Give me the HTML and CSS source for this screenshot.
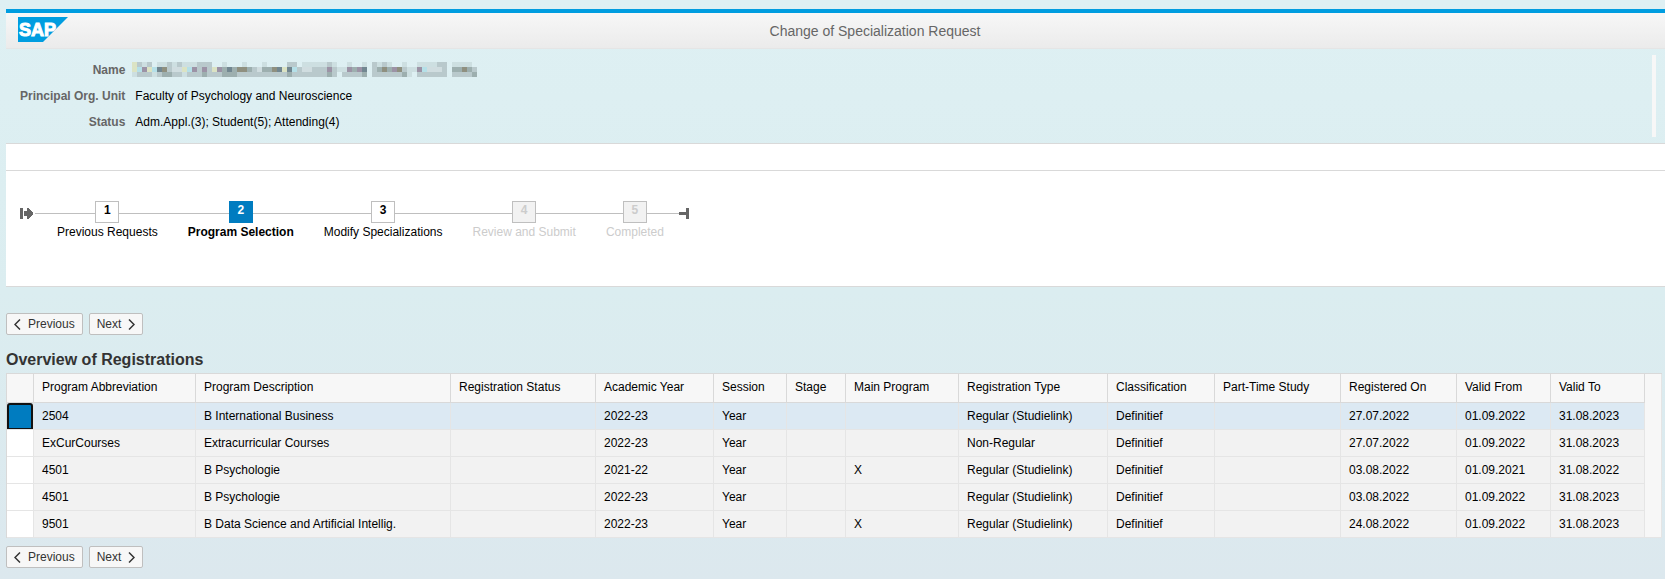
FILE: index.html
```html
<!DOCTYPE html>
<html lang="en">
<head>
    <meta charset="UTF-8">
    <meta name="viewport" content="width=device-width, initial-scale=1.0">
    <title>Change of Specialization Request</title>
    <link rel="stylesheet" href="styles.css">
</head>
<body>
    <header class="page-header">
        <svg class="logo" width="50" height="25" viewBox="0 0 50 25" role="img" aria-label="SAP">
            <path d="M0 0H50L25 25H0z" fill="#009de0"/>
            <text class="logo-text" x="1" y="19">SAP</text>
        </svg>
        <h1 class="page-title">Change of Specialization Request</h1>
    </header>

    <section class="student">
        <dl class="student-info">
            <dt>Name</dt>
            <dd>
                <!-- name is masked -->
                <svg class="masked" width="345" height="15" viewBox="0 0 69 3" preserveAspectRatio="none" shape-rendering="crispEdges">
                    <g fill="none" stroke-width="1">
                        <path stroke="#cddfe1" d="M2 .5h1M5 .5h2M8 .5h1M10 .5h3M18 .5h1M22 .5h1M26 .5h1M34 .5h5M40 .5h1M43 .5h1M46 .5h1M49 .5h3M54 .5h1M57 .5h4M64 .5h4M41 1.5h2M55 1.5h2M0 2.5h1M4 2.5h1M10 2.5h1M55 2.5h1"/>
                        <path stroke="#b9c9cc" d="M1 .5h1M3 .5h1M7 .5h1M9 .5h1M13 .5h3M31 .5h2M39 .5h1M48 .5h1M50 .5h1M61 .5h2M7 1.5h34M48 1.5h7M57 1.5h6M64 1.5h5M1 2.5h3M5 2.5h5M11 2.5h30M42 2.5h5M48 2.5h7M57 2.5h6M64 2.5h5"/>
                        <path stroke="#9dafaf" d="M18 1.5h1M20 1.5h1M23 1.5h1M26 1.5h2M44 1.5h1M49 1.5h1M51 1.5h1M64 1.5h2M67 1.5h1M6 2.5h2M14 2.5h1M18 2.5h3M31 2.5h1M39 2.5h1M46 2.5h1M54 2.5h1M68 2.5h1"/>
                        <path stroke="#728791" d="M5 1.5h1M19 1.5h1M29 1.5h1M31 1.5h1M46 1.5h1"/>
                        <path stroke="#8f9080" d="M6 1.5h1M21 1.5h2M28 1.5h1M50 1.5h1M53 1.5h1M66 1.5h1"/>
                        <path stroke="#9c93a6" d="M2 1.5h1M12 1.5h1M14 1.5h1M17 1.5h1M39 1.5h1M43 1.5h1M45 1.5h1M52 1.5h1M57 1.5h1"/>
                        <path stroke="#b5e0e8" d="M1 1.5h1M4 1.5h1M11 1.5h1M32 1.5h1M58 1.5h1"/>
                        <path stroke="#d0dde0" d="M8 1.5h2M25 1.5h1M34 1.5h2M59 1.5h3"/>
                        <path stroke="#dbe3c4" d="M0 .5h1M0 1.5h1M3 1.5h1M10 1.5h1M16 1.5h1M30 1.5h1"/>
                    </g>
                </svg>
            </dd>
            <dt>Principal Org. Unit</dt>
            <dd>Faculty of Psychology and Neuroscience</dd>
            <dt>Status</dt>
            <dd>Adm.Appl.(3); Student(5); Attending(4)</dd>
        </dl>
        <div class="student-handle"></div>
    </section>

    <div class="message-bar"></div>

    <nav class="roadmap">
        <svg class="roadmap-start" width="13" height="11" viewBox="0 0 13 11" shape-rendering="crispEdges">
            <path d="M0 0h3v11H0zM4 3h3V0h2v1h1v1h1v1h1v1h1v3h-1v1h-1v1h-1v1H9v1H7V8H4z" fill="#666"/>
        </svg>
        <ol class="steps">
            <li class="step">
                <span class="step-number">1</span>
                <span class="step-label">Previous Requests</span>
            </li>
            <li class="step current">
                <span class="step-number">2</span>
                <span class="step-label">Program Selection</span>
            </li>
            <li class="step">
                <span class="step-number">3</span>
                <span class="step-label">Modify Specializations</span>
            </li>
            <li class="step disabled">
                <span class="step-number">4</span>
                <span class="step-label">Review and Submit</span>
            </li>
            <li class="step disabled">
                <span class="step-number">5</span>
                <span class="step-label">Completed</span>
            </li>
        </ol>
        <svg class="roadmap-end" width="10" height="11" viewBox="0 0 10 11" shape-rendering="crispEdges">
            <path d="M0 4h7V0h3v11H7V7H0z" fill="#666"/>
        </svg>
    </nav>

    <main class="content">
        <div class="buttons">
            <button type="button" class="btn">
                <svg width="7" height="11" viewBox="0 0 7 11"><path d="M6 .5L1 5.5l5 5" fill="none" stroke="#333" stroke-width="1.5"/></svg>
                Previous
            </button>
            <button type="button" class="btn">
                Next
                <svg width="7" height="11" viewBox="0 0 7 11"><path d="M1 .5l5 5-5 5" fill="none" stroke="#333" stroke-width="1.5"/></svg>
            </button>
        </div>

        <h2 class="table-title">Overview of Registrations</h2>
        <table class="registrations">
            <colgroup>
                <col class="col-select">
                <col class="col-abbreviation">
                <col class="col-description">
                <col class="col-status">
                <col class="col-year">
                <col class="col-session">
                <col class="col-stage">
                <col class="col-main">
                <col class="col-type">
                <col class="col-classification">
                <col class="col-parttime">
                <col class="col-registered">
                <col class="col-from">
                <col class="col-to">
                <col class="col-scroll">
            </colgroup>
            <tbody>
                <tr>
                    <th></th>
                    <th>Program Abbreviation</th>
                    <th>Program Description</th>
                    <th>Registration Status</th>
                    <th>Academic Year</th>
                    <th>Session</th>
                    <th>Stage</th>
                    <th>Main Program</th>
                    <th>Registration Type</th>
                    <th>Classification</th>
                    <th>Part-Time Study</th>
                    <th>Registered On</th>
                    <th>Valid From</th>
                    <th>Valid To</th>
                    <td class="scroll" rowspan="6"></td>
                </tr>
                <tr class="selected">
                    <td class="select"><input type="radio" name="registration" aria-label="2504" checked></td>
                    <td>2504</td>
                    <td>B International Business</td>
                    <td></td>
                    <td>2022-23</td>
                    <td>Year</td>
                    <td></td>
                    <td></td>
                    <td>Regular (Studielink)</td>
                    <td>Definitief</td>
                    <td></td>
                    <td>27.07.2022</td>
                    <td>01.09.2022</td>
                    <td>31.08.2023</td>
                </tr>
                <tr>
                    <td class="select"><input type="radio" name="registration" aria-label="ExCurCourses"></td>
                    <td>ExCurCourses</td>
                    <td>Extracurricular Courses</td>
                    <td></td>
                    <td>2022-23</td>
                    <td>Year</td>
                    <td></td>
                    <td></td>
                    <td>Non-Regular</td>
                    <td>Definitief</td>
                    <td></td>
                    <td>27.07.2022</td>
                    <td>01.09.2022</td>
                    <td>31.08.2023</td>
                </tr>
                <tr>
                    <td class="select"><input type="radio" name="registration" aria-label="4501"></td>
                    <td>4501</td>
                    <td>B Psychologie</td>
                    <td></td>
                    <td>2021-22</td>
                    <td>Year</td>
                    <td></td>
                    <td>X</td>
                    <td>Regular (Studielink)</td>
                    <td>Definitief</td>
                    <td></td>
                    <td>03.08.2022</td>
                    <td>01.09.2021</td>
                    <td>31.08.2022</td>
                </tr>
                <tr>
                    <td class="select"><input type="radio" name="registration" aria-label="4501"></td>
                    <td>4501</td>
                    <td>B Psychologie</td>
                    <td></td>
                    <td>2022-23</td>
                    <td>Year</td>
                    <td></td>
                    <td></td>
                    <td>Regular (Studielink)</td>
                    <td>Definitief</td>
                    <td></td>
                    <td>03.08.2022</td>
                    <td>01.09.2022</td>
                    <td>31.08.2023</td>
                </tr>
                <tr>
                    <td class="select"><input type="radio" name="registration" aria-label="9501"></td>
                    <td>9501</td>
                    <td>B Data Science and Artificial Intellig.</td>
                    <td></td>
                    <td>2022-23</td>
                    <td>Year</td>
                    <td></td>
                    <td>X</td>
                    <td>Regular (Studielink)</td>
                    <td>Definitief</td>
                    <td></td>
                    <td>24.08.2022</td>
                    <td>01.09.2022</td>
                    <td>31.08.2023</td>
                </tr>
            </tbody>
        </table>

        <div class="buttons">
            <button type="button" class="btn">
                <svg width="7" height="11" viewBox="0 0 7 11"><path d="M6 .5L1 5.5l5 5" fill="none" stroke="#333" stroke-width="1.5"/></svg>
                Previous
            </button>
            <button type="button" class="btn">
                Next
                <svg width="7" height="11" viewBox="0 0 7 11"><path d="M1 .5l5 5-5 5" fill="none" stroke="#333" stroke-width="1.5"/></svg>
            </button>
        </div>
    </main>
</body>
</html>
```
FILE: styles.css
```css
* {
    box-sizing: border-box;
}
html {
    min-height: 100%;
    background: linear-gradient(#def0f3, #dbedf0 50%, #dce8ee);
}
body {
    margin: 0;
    padding: 9px 0 0 6px;
    font-family: Arial, "Liberation Sans", sans-serif;
    font-size: 12px;
    line-height: 16px;
    color: #000;
}
.page-header {
    display: flex;
    align-items: center;
    height: 40px;
    padding-left: 12px;
    border-top: 4px solid #009de0;
    border-bottom: 1px solid #e5e5e5;
    background: linear-gradient(#f7f7f7, #ebebeb);
}
.logo {
    margin: 0 17px 3px 0;
}
.logo-text {
    font-size: 18px;
    font-weight: 700;
    fill: #fff;
    stroke: #fff;
}
.page-title {
    flex: 1;
    margin: 0;
    font-size: 14px;
    font-weight: 400;
    text-align: center;
    color: #666;
}

/* Student data */
.student {
    display: flex;
    justify-content: space-between;
    padding: 6px 9px 6px 14px;
}
.student-info {
    display: grid;
    grid-template-columns: auto 1fr;
    column-gap: 10px;
    row-gap: 10px;
    margin: 0;
    padding: 7px 0;
}
.student-info dt {
    font-weight: 700;
    text-align: right;
    color: #666;
}
.student-info dd {
    margin: 0;
}
.masked {
    display: block;
    margin-left: -3px;
}
.student-handle {
    width: 4px;
    background: #f7f7f7;
}

.message-bar {
    height: 27px;
    border-top: 1px solid #d9d9d9;
    background: #fff;
}

/* Roadmap */
.roadmap {
    display: flex;
    align-items: flex-start;
    height: 117px;
    padding: 30px 14px;
    border-top: 1px solid #d9d9d9;
    border-bottom: 1px solid #d9d9d9;
    background: #fff;
}
.roadmap-start,
.roadmap-end {
    margin-top: 7px;
}
.steps {
    display: flex;
    margin: 0 0 0 2px;
    padding: 0 0 0 7px;
    list-style: none;
    background: linear-gradient(#bfbfbf, #bfbfbf) 0 12px / 100% 1px no-repeat;
}
.step {
    display: flex;
    flex-direction: column;
    align-items: center;
    gap: 1px;
}
.step-label {
    padding: 0 15px;
}
.step-number {
    width: 24px;
    height: 22px;
    border: 1px solid #bfbfbf;
    background: #fff;
    font-weight: 700;
    text-align: center;
}
.current .step-number {
    border-color: #007cc0;
    background: #007cc0;
    color: #fff;
}
.current .step-label {
    font-weight: 700;
}
.disabled {
    color: #ccc;
}
.disabled .step-number {
    background: #f2f2f2;
}

/* Content */
.content {
    padding: 26px 3px 12px 0;
}
.buttons {
    display: flex;
    gap: 6px;
}
.btn {
    display: flex;
    align-items: center;
    gap: 7px;
    height: 22px;
    padding: 0 7px;
    border: 1px solid #bfbfbf;
    border-radius: 2px;
    background: #f7f7f7;
    font-family: inherit;
    font-size: 12px;
    color: #333;
}
.table-title {
    margin: 15px 0 3px;
    font-size: 16px;
    line-height: 20px;
    color: #333;
}
.registrations {
    width: 100%;
    margin-bottom: 8px;
    table-layout: fixed;
    border: 1px solid #d9d9d9;
    border-width: 1px 0 0 1px;
    border-spacing: 0;
}
.registrations th,
.registrations td {
    height: 27px;
    padding: 0 8px;
    border: 1px solid #e5e5e5;
    border-width: 0 1px 1px 0;
    background: #f2f2f2;
    font-weight: 400;
    text-align: left;
    white-space: nowrap;
}
.registrations th {
    height: 29px;
    padding-bottom: 2px;
    border-color: #d9d9d9;
    background: #f7f7f7;
}
.registrations .selected td {
    background: #dce9f3;
}
.registrations .select {
    padding: 0;
    background: #fff;
}
.select input {
    display: block;
    width: 100%;
    height: 26px;
    margin: 0;
    appearance: none;
}
.select input:checked {
    border: 2px solid #111;
    border-bottom-width: 1px;
    border-radius: 3px 3px 0 0;
    background: #007cc0;
}
.registrations .scroll {
    padding: 0;
    background: #f7f7f7;
}
.col-select { width: 27px; }
.col-abbreviation { width: 162px; }
.col-description { width: 255px; }
.col-status { width: 145px; }
.col-year { width: 118px; }
.col-session { width: 73px; }
.col-stage { width: 59px; }
.col-main { width: 113px; }
.col-type { width: 149px; }
.col-classification { width: 107px; }
.col-parttime { width: 126px; }
.col-registered { width: 116px; }
.col-from,
.col-to { width: 94px; }
.col-scroll { width: 17px; }
```
